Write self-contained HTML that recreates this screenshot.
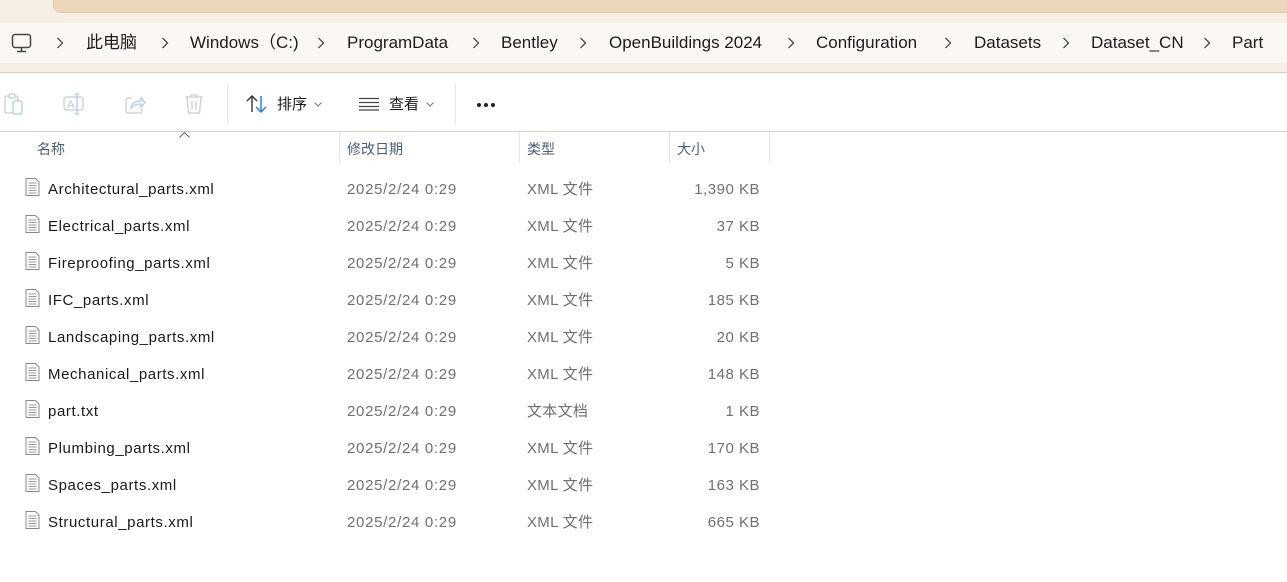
<!DOCTYPE html>
<html><head><meta charset="utf-8"><style>
*{margin:0;padding:0;box-sizing:border-box}
body{width:1287px;height:582px;overflow:hidden;background:#fff;font-family:"Liberation Sans","Noto Sans CJK SC",sans-serif;position:relative}
.a{position:absolute;white-space:nowrap;line-height:20px}
#top{position:absolute;left:0;top:0;width:1287px;height:73px;background:#f7efe5;border-bottom:1px solid #d9ccb6}
#tan{position:absolute;left:53px;top:-10px;width:1240px;height:23px;background:#ecd8b8;border-radius:0 0 0 8px;border-left:1px solid #e0cba8;border-bottom:1px solid #e0cba8}
#bc{position:absolute;left:0;top:23px;width:1287px;height:40px;background:#fbf8f4}
.bc{font-size:17px;color:#1c1c1c;top:33px}
.ch{position:absolute;top:37px}
.hd{font-size:14px;color:#4b5e78;top:139px}
.sep{position:absolute;top:132px;width:1px;height:31px;background:#e5e5e5}
.nm{font-size:15px;color:#1a1a1a;left:48px;letter-spacing:0.6px}
.dt{font-size:15px;color:#707070;left:347px;letter-spacing:0.7px}
.ty{font-size:15px;color:#707070;left:527px;letter-spacing:0.3px}
.sz{font-size:15px;color:#707070;right:527px;text-align:right;letter-spacing:0.5px}
.ic{position:absolute;left:25px;width:15px;height:18px}
</style></head><body>
<div id="top"><div id="tan"></div><div id="bc"></div></div>
<svg class="a" style="left:11px;top:33px" width="22" height="20" viewBox="0 0 22 20"><rect x="1.5" y="1.5" width="18" height="13" rx="2.5" fill="none" stroke="#444" stroke-width="1.5"/><path d="M10.5 15v3M6 18.5h9" stroke="#444" stroke-width="1.5"/></svg>
<svg class="ch" style="left:56px" width="8" height="12" viewBox="0 0 8 12"><path d="M1.5 1l5 5-5 5" fill="none" stroke="#333" stroke-width="1.2"/></svg>
<span class="a bc" style="left:86px">此电脑</span>
<svg class="ch" style="left:161px" width="8" height="12" viewBox="0 0 8 12"><path d="M1.5 1l5 5-5 5" fill="none" stroke="#333" stroke-width="1.2"/></svg>
<span class="a bc" style="left:190px">Windows（C:)</span>
<svg class="ch" style="left:317px" width="8" height="12" viewBox="0 0 8 12"><path d="M1.5 1l5 5-5 5" fill="none" stroke="#333" stroke-width="1.2"/></svg>
<span class="a bc" style="left:347px">ProgramData</span>
<svg class="ch" style="left:472px" width="8" height="12" viewBox="0 0 8 12"><path d="M1.5 1l5 5-5 5" fill="none" stroke="#333" stroke-width="1.2"/></svg>
<span class="a bc" style="left:501px">Bentley</span>
<svg class="ch" style="left:579px" width="8" height="12" viewBox="0 0 8 12"><path d="M1.5 1l5 5-5 5" fill="none" stroke="#333" stroke-width="1.2"/></svg>
<span class="a bc" style="left:609px">OpenBuildings 2024</span>
<svg class="ch" style="left:787px" width="8" height="12" viewBox="0 0 8 12"><path d="M1.5 1l5 5-5 5" fill="none" stroke="#333" stroke-width="1.2"/></svg>
<span class="a bc" style="left:816px">Configuration</span>
<svg class="ch" style="left:944px" width="8" height="12" viewBox="0 0 8 12"><path d="M1.5 1l5 5-5 5" fill="none" stroke="#333" stroke-width="1.2"/></svg>
<span class="a bc" style="left:974px">Datasets</span>
<svg class="ch" style="left:1062px" width="8" height="12" viewBox="0 0 8 12"><path d="M1.5 1l5 5-5 5" fill="none" stroke="#333" stroke-width="1.2"/></svg>
<span class="a bc" style="left:1091px">Dataset_CN</span>
<svg class="ch" style="left:1203px" width="8" height="12" viewBox="0 0 8 12"><path d="M1.5 1l5 5-5 5" fill="none" stroke="#333" stroke-width="1.2"/></svg>
<span class="a bc" style="left:1232px">Part</span>

<!-- toolbar -->
<svg class="a" style="left:4px;top:93px" width="20" height="22" viewBox="0 0 20 22"><rect x="1" y="3" width="13" height="17" rx="2" fill="none" stroke="#ccc" stroke-width="1.3"/><rect x="5" y="1" width="6" height="4" rx="1" fill="#fff" stroke="#ccc" stroke-width="1.2"/><rect x="9" y="8" width="9" height="13" rx="2" fill="#fff" stroke="#a9cdee" stroke-width="1.3"/></svg>
<svg class="a" style="left:63px;top:93px" width="22" height="22" viewBox="0 0 22 22"><rect x="1" y="4" width="19" height="13" rx="2.5" fill="none" stroke="#ccc" stroke-width="1.3"/><text x="4" y="15" font-size="11" fill="#a9cdee" font-family="Liberation Sans">A</text><path d="M14 1v20M12 1h4M12 21h4" stroke="#a9cdee" stroke-width="1.3"/></svg>
<svg class="a" style="left:124px;top:93px" width="22" height="22" viewBox="0 0 22 22"><path d="M8 5H4a2 2 0 0 0-2 2v11a2 2 0 0 0 2 2h12a2 2 0 0 0 2-2v-3" fill="none" stroke="#ccc" stroke-width="1.3"/><path d="M7 15c1-5 5-7 10-7V5l4 4.5-4 4.5v-3c-4 0-7 1-10 4z" fill="none" stroke="#a9cdee" stroke-width="1.3"/></svg>
<svg class="a" style="left:184px;top:93px" width="20" height="22" viewBox="0 0 20 22"><path d="M1 4h18M7 4V2h6v2M3 4l1.5 16h11L17 4M8 8v9M12 8v9" fill="none" stroke="#ccc" stroke-width="1.3"/></svg>
<div class="a" style="left:227px;top:84px;width:1px;height:40px;background:#e8e8e8"></div>
<svg class="a" style="left:246px;top:94px" width="22" height="20" viewBox="0 0 22 20"><path d="M6 18V2M1 7l5-5 5 5" fill="none" stroke="#333" stroke-width="1.4"/><path d="M15 2v16M10 13l5 5 5-5" fill="none" stroke="#1a7fd6" stroke-width="1.4"/></svg>
<span class="a" style="left:277px;top:95px;font-size:15px;color:#1a1a1a">排序</span>
<svg class="a" style="left:314px;top:102px" width="8" height="5"><path d="M.5.5l3.5 3.5 3.5-3.5" fill="none" stroke="#777"/></svg>
<svg class="a" style="left:359px;top:97px" width="20" height="14" viewBox="0 0 20 14"><path d="M0 1.5h20M0 5.5h20M0 9.5h20M0 13h20" stroke="#444" stroke-width="1.3"/></svg>
<span class="a" style="left:389px;top:95px;font-size:15px;color:#1a1a1a">查看</span>
<svg class="a" style="left:426px;top:102px" width="8" height="5"><path d="M.5.5l3.5 3.5 3.5-3.5" fill="none" stroke="#777"/></svg>
<div class="a" style="left:455px;top:84px;width:1px;height:40px;background:#e8e8e8"></div>
<svg class="a" style="left:476px;top:102px" width="22" height="6"><circle cx="3" cy="3" r="2" fill="#222"/><circle cx="10" cy="3" r="2" fill="#222"/><circle cx="17" cy="3" r="2" fill="#222"/></svg>
<div class="a" style="left:0;top:131px;width:1287px;height:1px;background:#dccfbd"></div>

<!-- headers -->
<svg class="a" style="left:179px;top:132px" width="11" height="6"><path d="M.5 5.5l5-5 5 5" fill="none" stroke="#666"/></svg>
<span class="a hd" style="left:37px">名称</span>
<div class="sep" style="left:339px"></div>
<span class="a hd" style="left:347px">修改日期</span>
<div class="sep" style="left:519px"></div>
<span class="a hd" style="left:527px">类型</span>
<div class="sep" style="left:669px"></div>
<span class="a hd" style="left:677px">大小</span>
<div class="sep" style="left:769px"></div>

<div id="rows"></div>
<script>
var d=[["Architectural_parts.xml","XML 文件","1,390 KB"],["Electrical_parts.xml","XML 文件","37 KB"],["Fireproofing_parts.xml","XML 文件","5 KB"],["IFC_parts.xml","XML 文件","185 KB"],["Landscaping_parts.xml","XML 文件","20 KB"],["Mechanical_parts.xml","XML 文件","148 KB"],["part.txt","文本文档","1 KB"],["Plumbing_parts.xml","XML 文件","170 KB"],["Spaces_parts.xml","XML 文件","163 KB"],["Structural_parts.xml","XML 文件","665 KB"]];
var h="";
d.forEach(function(r,i){var y=180+i*37;
h+='<svg class="ic" style="top:'+(y-2)+'px" viewBox="0 0 15 18"><path d="M1 .5h9.5l3.5 3.5v13.5H1z" fill="#fff" stroke="#888"/><path d="M3.5 5h8M3.5 7.5h8M3.5 10h8M3.5 12.5h8M3.5 15h8" stroke="#999"/></svg>';
h+='<span class="a nm" style="top:'+y+'px">'+r[0]+'</span><span class="a dt" style="top:'+y+'px">2025/2/24 0:29</span><span class="a ty" style="top:'+y+'px">'+r[1]+'</span><span class="a sz" style="top:'+y+'px">'+r[2]+'</span>';});
document.getElementById("rows").innerHTML=h;
</script>
</body></html>
